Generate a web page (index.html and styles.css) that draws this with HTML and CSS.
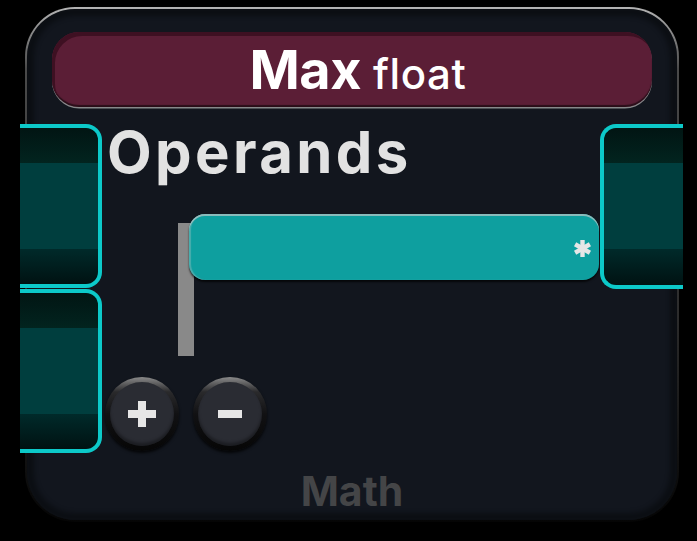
FILE: index.html
```html
<!DOCTYPE html>
<html>
<head>
<meta charset="utf-8">
<link rel="stylesheet" href="styles.css">
</head>
<body>
<div class="node">
  <div class="header"><span class="name">Max</span><span class="type">float</span></div>
  <div class="title">Operands</div>
  <div class="list">
    <div class="rail"></div>
    <div class="item">
      <svg class="star" width="19" height="19" viewBox="0 0 19 19">
        <g stroke="#e6e6e6" stroke-width="4.4" stroke-linecap="butt">
          <line x1="9.5" y1="1" x2="9.5" y2="18"/>
          <line x1="2.1" y1="5.25" x2="16.9" y2="13.75"/>
          <line x1="2.1" y1="13.75" x2="16.9" y2="5.25"/>
        </g>
      </svg>
    </div>
  </div>
  <div class="buttons">
    <div class="btn">
      <svg width="28" height="26" viewBox="0 0 28 26"><rect x="0" y="9" width="28" height="8" fill="#e6e6e6"/><rect x="10" y="0" width="8" height="26" fill="#e6e6e6"/></svg>
    </div>
    <div class="btn">
      <svg width="24" height="8" viewBox="0 0 24 8"><rect x="0" y="0" width="24" height="8" fill="#e6e6e6"/></svg>
    </div>
  </div>
  <div class="footer">Math</div>
  <div class="port port-in p1"></div>
  <div class="port port-in p2"></div>
  <div class="port port-out p3"></div>
</div>
</body>
</html>
```
FILE: styles.css
```css
html, body {
  margin: 0;
  padding: 0;
  background: #000;
}
body {
  width: 697px;
  height: 541px;
  overflow: hidden;
  font-family: Inter, "Noto Sans", sans-serif;
}
.node {
  position: relative;
  box-sizing: border-box;
  margin: 7px 0 0 25px;
  width: 654px;
  height: 515px;
  padding: 23px 25px 0 25px;
  border: 2px solid transparent;
  border-radius: 50px;
  background:
    linear-gradient(#12161e, #12161e) padding-box,
    linear-gradient(180deg, #b4b4b4 0%, #4a4a4a 12%, #2c2c2c 60%, #050505 100%) border-box;
  box-shadow: inset 0 0 4px 7px rgba(5, 7, 10, 0.5);
}
.header {
  height: 75px;
  line-height: 75px;
  border-radius: 27px;
  background: #5b1e36;
  text-align: center;
  padding-left: 12px;
  color: #ffffff;
  white-space: nowrap;
  box-shadow:
    inset 3px 4px 0 #3e1022,
    inset 0 -2px 1px rgba(0, 0, 0, 0.55),
    0 1.5px 0 rgba(175, 175, 175, 0.75);
}
.name {
  font-size: 54px;
  font-weight: 700;
  letter-spacing: -0.5px;
}
.type {
  margin-left: 12px;
  font-size: 42px;
  font-weight: 500;
  letter-spacing: 0.6px;
}
.title {
  margin: 17px 0 0 55px;
  font-size: 58px;
  line-height: 56px;
  font-weight: 700;
  color: #e2e2e2;
  letter-spacing: 3.4px;
}
.list {
  display: grid;
  margin: 34px 0 0 126px;
  width: 421px;
  height: 142px;
}
.rail {
  grid-area: 1 / 1;
  width: 16px;
  height: 133px;
  margin-top: 9px;
  background: #898989;
}
.item {
  grid-area: 1 / 1;
  align-self: start;
  margin-left: 11px;
  height: 66px;
  box-sizing: border-box;
  border-radius: 16px;
  background: #0e9f9f;
  display: flex;
  justify-content: flex-end;
  align-items: center;
  padding-right: 7px;
  box-shadow:
    inset 0 2px 0 rgba(190, 200, 200, 0.7),
    inset 2px 0 1px rgba(190, 200, 200, 0.35),
    0 2px 2px rgba(0, 0, 0, 0.7);
}
.star {
  display: block;
  margin-top: 2px;
}
.buttons {
  display: flex;
  gap: 14px;
  margin: 21px 0 0 53px;
}
.btn {
  box-sizing: border-box;
  width: 74px;
  height: 74px;
  border-radius: 50%;
  border: 5px solid transparent;
  background:
    linear-gradient(#2a2c33, #2a2c33) padding-box,
    linear-gradient(180deg, #8a8a8a 0%, #2a2a2c 20%, #111113 50%, #060606 100%) border-box;
  box-shadow: 0 2px 3px rgba(0, 0, 0, 0.8), inset 0 -3px 3px rgba(0, 0, 0, 0.35);
  display: flex;
  justify-content: center;
  align-items: center;
}
.btn svg {
  display: block;
}
.footer {
  margin-top: 20px;
  text-align: center;
  font-size: 41px;
  line-height: 41px;
  font-weight: 700;
  color: #444547;
}
.port {
  position: absolute;
  box-sizing: border-box;
  border: 4px solid #0cc9c9;
  background: linear-gradient(180deg,
    #011513 0px, #02241f 35px,
    #003e3e 35px, #003e3e 121px,
    #002a2a 121px, #001212 100%);
}
.port-in {
  left: -7px;
  width: 82px;
  border-left: none;
  border-radius: 0 16px 16px 0;
}
.p1 { top: 115px; height: 164px; }
.p2 { top: 280px; height: 164px; }
.port-out {
  left: 573px;
  top: 115px;
  width: 83px;
  height: 165px;
  border-right: none;
  border-radius: 16px 0 0 16px;
}
```
